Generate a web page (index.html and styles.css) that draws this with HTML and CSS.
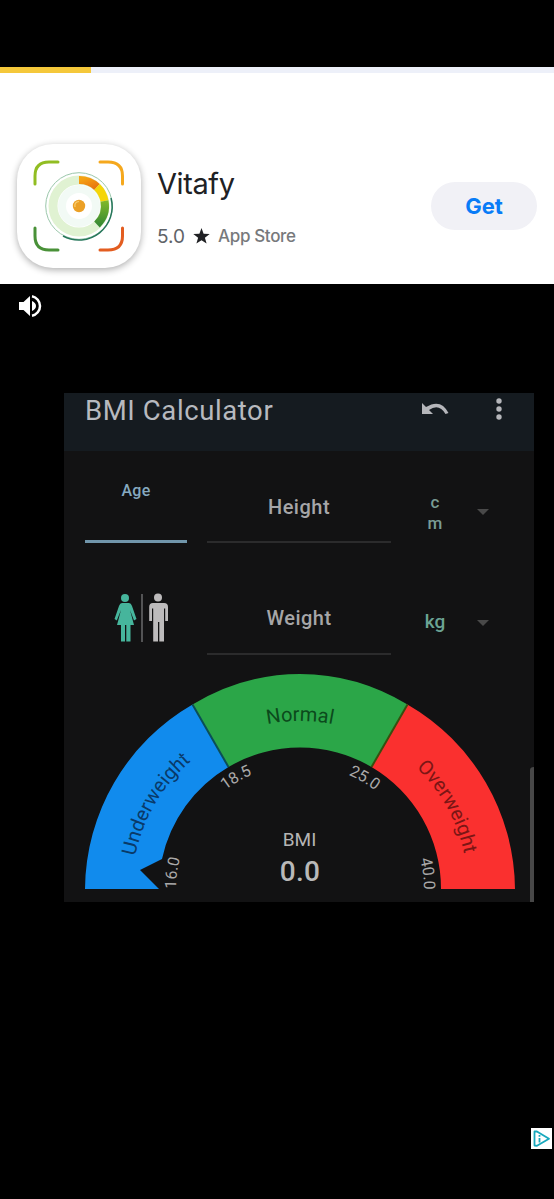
FILE: index.html
```html
<!DOCTYPE html>
<html lang="en">
<head>
<meta charset="utf-8">
<title>Vitafy</title>
<link rel="stylesheet" href="styles.css">
</head>
<body>
<div class="progress"><div class="progress-fill"></div></div>
<header class="app">
  <div class="app-icon">
    <svg width="124" height="124" viewBox="0 0 124 124" fill="none">
      <defs>
        <linearGradient id="o" x1="0" y1="0" x2="1" y2="1"><stop offset="0" stop-color="#f5a313"/><stop offset="1" stop-color="#e87510"/></linearGradient>
        <linearGradient id="g" x1="0" y1="0" x2="0" y2="1"><stop offset="0" stop-color="#80b82a"/><stop offset="1" stop-color="#388b33"/></linearGradient>
      </defs>
      <g stroke-width="3" stroke-linecap="round">
        <path d="M18 40V32Q18 18 32 18H41" stroke="#91bd22"/>
        <path d="M83 18H91Q105.500 18 105.500 32V40" stroke="#f5a81d"/>
        <path d="M18 84V92Q18 106 32 106H41" stroke="#499138"/>
        <path d="M83 106H91Q105.500 106 105.500 92V84" stroke="#e35d20"/>
      </g>
      <circle cx="62" cy="62" r="33.300" stroke="#9bc7ab" stroke-width="1"/>
      <path d="M94 54A33.300 33.300 0 0 1 46 92" stroke="#26765a" stroke-width="1.500"/>
      <circle cx="62" cy="62" r="26" stroke="#e0f2d2" stroke-width="9"/>
      <circle cx="62" cy="62" r="17" stroke="#f2faf5" stroke-width="8"/>
      <path d="M62 36A26 26 0 0 1 80 43" stroke="url(#o)" stroke-width="8"/>
      <path d="M80 43A26 26 0 0 1 87.500 57" stroke="#f5d508" stroke-width="8"/>
      <path d="M87.500 57A26 26 0 0 1 80 80.500" stroke="url(#g)" stroke-width="8"/>
      <circle cx="62" cy="62" r="6.200" fill="#eba026"/>
      <path d="M58 63Q57 58 62 57.500" stroke="#f9cf71" stroke-width="1.200"/>
    </svg>
  </div>
  <div class="app-info">
    <div class="app-name">Vitafy</div>
    <div class="app-meta">
      <span class="rating">5.0</span>
      <svg width="17" height="16" viewBox="0 0 17 16"><path d="M8.500 0L10.600 5.700L16.700 6L11.900 9.800L13.600 15.600L8.500 12.300L3.400 15.600L5.100 9.800L.3 6L6.400 5.700Z" fill="#202124"/></svg>
      <span class="store">App Store</span>
    </div>
  </div>
  <button class="get">Get</button>
</header>
<main class="video">
  <svg class="sound" width="25" height="24" viewBox="0 0 25 24"><path d="M1 8H5.500L12 2V22L5.500 16H1ZM14 7Q18 9 18 12T14 17Z" fill="#fff"/><path d="M14 2.200A10 10 0 0 1 14 21.800" fill="none" stroke="#fff" stroke-width="2.500"/></svg>
  <section class="calc">
    <div class="bar">
      <h1>BMI Calculator</h1>
      <svg class="undo" width="28" height="15" viewBox="0 0 28 15"><path d="M1 1V12H12L8 8Q18 1 24.500 12L27.500 11Q20-4 5 5Z" fill="#b5b6ba"/></svg>
      <svg class="dots" width="6" height="22" viewBox="0 0 6 22" fill="#b5b6ba"><circle cx="3" cy="3" r="2.700"/><circle cx="3" cy="11" r="2.700"/><circle cx="3" cy="19" r="2.700"/></svg>
    </div>
    <div class="row first">
      <div class="field age">Age</div>
      <div class="field">Height</div>
      <div class="unit">c<br>m</div>
      <span class="arrow"></span>
    </div>
    <div class="row second">
      <div class="gender">
        <svg width="56" height="50" viewBox="0 0 56 50">
          <g fill="#46b59c"><circle cx="11" cy="5" r="4"/><path d="M8 10H15Q17 10 18 13L22.500 26L20 27.500L16 17L20 32H16.500V48.500H12.300V32H11V48.500H7V32H3L7 17L2.800 27.500L.5 26L5 13Q6 10 8 10Z"/></g>
          <path d="M28 1V49" stroke="#77787a" stroke-width="1.300"/>
          <g fill="#bdbbbc"><circle cx="44" cy="4.500" r="4"/><path d="M39 10H50Q54 10 54 14V28H51.200V15.500H50V48.500H45.300V29H44V48.500H39.200V15.500H38V28H35.200V14Q35.200 10 39 10Z"/></g>
        </svg>
      </div>
      <div class="field">Weight</div>
      <div class="unit kg">kg</div>
      <span class="arrow"></span>
    </div>
    <svg class="gauge" width="470" height="240" viewBox="64 662 470 240">
      <defs>
        <path id="label-arc" d="M132 889A168 168 0 0 1 468 889"/>
        <path id="normal-arc" d="M134 887A166 166 0 0 1 466 887"/>
        <path id="tick-arc" d="M176 900V889A124 124 0 0 1 424 889V900"/>
      </defs>
      <path d="M85 889A215 215 0 0 1 192.500 704.500L228.500 767A141 141 0 0 0 162 859L140 870L159 889Z" fill="#118bed"/>
      <path d="M192.500 704.500Q243 674 300 674T407.500 704.500L371.500 767A141 141 0 0 0 228.500 767Z" fill="#2ba648"/>
      <path d="M407.500 704.500A215 215 0 0 1 515 889H441A141 141 0 0 0 371.500 767Z" fill="#fa302f"/>
      <path d="M192.500 704.500L228.500 767" stroke="#0b4f56" stroke-width="2"/>
      <path d="M407.500 704.500L371.500 767" stroke="#36500f" stroke-width="2"/>
      <g class="zone">
        <text fill="#093a69"><textPath href="#label-arc" startOffset="33">Underweight</textPath></text>
        <text fill="#0b4a1c" text-anchor="middle"><textPath href="#normal-arc" startOffset="50%">Normal</textPath></text>
        <text fill="#7b1615"><textPath href="#label-arc" startOffset="392">Overweight</textPath></text>
      </g>
      <g class="tick">
        <text><textPath href="#tick-arc" startOffset="11">16.0</textPath></text>
        <text text-anchor="middle"><textPath href="#tick-arc" startOffset="141">18.5</textPath></text>
        <text text-anchor="middle"><textPath href="#tick-arc" startOffset="271">25.0</textPath></text>
        <text text-anchor="end"><textPath href="#tick-arc" startOffset="401">40.0</textPath></text>
      </g>
      <text class="bmi" x="299.500" y="846">BMI</text>
      <text class="value" x="300" y="881">0.0</text>
      <path d="M530 902V770Q530 767 534 767V902Z" fill="#474747"/>
    </svg>
  </section>
  <svg class="adchoice" width="21" height="21" viewBox="0 0 21 21"><path d="M0 0H21V21H0Z" fill="#fff"/><path d="M3.500 3.500V17.500L6 17.800L18 10.800L5.500 3.300Z" fill="none" stroke="#18a8bd" stroke-width="1.800" stroke-linejoin="round"/><path d="M8.500 7V8.800M8.500 10V14.500" stroke="#18a8bd" stroke-width="1.800"/></svg>
</main>
</body>
</html>
```
FILE: styles.css
```css
* { box-sizing: border-box; }
body { margin: 0; height: 1199px; padding-top: 67px; background: #000; display: flex; flex-direction: column; font-family: Roboto, sans-serif; overflow: hidden; }
.progress { height: 6px; background: #edf0f9; }
.progress-fill { width: 91px; height: 6px; background: #f5c83b; }
.app { height: 211px; background: #fff; padding: 71px 17px 0 17px; display: flex; align-items: flex-start; font-family: Inter, sans-serif; }
.app-icon { width: 124px; height: 124px; border-radius: 36px; background: #fff; box-shadow: 0 2px 7px rgba(0, 0, 0, .32); }
.app-icon svg { display: block; margin-left: -.5px; }
.app-info { margin-left: 16px; padding-top: 20px; flex: 1; }
.app-name { font-size: 29px; line-height: 40px; color: #202124; letter-spacing: -.4px; }
.app-meta { display: flex; align-items: center; height: 24px; margin-top: 20px; color: #5f6368; }
.app-meta svg { margin: 0 8px; }
.rating { font-size: 19px; }
.store { font-size: 17px; font-weight: 500; color: #77797c; letter-spacing: -.35px; }
.get { width: 106px; height: 48px; margin-top: 38px; border: 0; border-radius: 24px; background: #f1f1f6; color: #087cf7; font: 700 22px Inter, sans-serif; }
.video { flex: 1; display: flex; flex-direction: column; }
.sound { margin: 10px 0 0 18px; }
.calc { width: 470px; height: 509px; margin: 75px 0 0 64px; background: #121213; }
.bar { height: 58px; display: flex; align-items: flex-start; background: #151b20; padding: 0 32px 0 21px; }
.bar h1 { margin: 0; flex: 1; font-size: 27.500px; font-weight: 400; line-height: 36px; letter-spacing: .6px; color: #b7b9bf; white-space: nowrap; }
.undo { margin: 9px 47px 0 0; }
.dots { margin-top: 5px; }
.row { display: grid; grid-template-columns: 102px 184px 48px 12px; column-gap: 20px; padding-left: 21px; }
.first { height: 92px; }
.second { height: 119px; padding-top: 19px; }
.field { height: 92px; border-bottom: 2px solid #2b2b2c; padding-top: 43px; text-align: center; font-size: 20px; font-weight: 500; line-height: 26px; color: #a6a6a8; letter-spacing: .5px; }
.second .field { height: 93px; }
.age { border-bottom: 3px solid #7196ab; padding-top: 28px; font-size: 16px; line-height: 24px; color: #86a9bf; letter-spacing: .2px; }
.unit { padding-top: 41px; text-align: center; font-size: 17px; font-weight: 500; line-height: 21px; color: #799c94; }
.kg { padding-top: 49px; font-size: 19px; color: #6ba394; }
.arrow { width: 12px; height: 6px; margin: 58px 0 0 -2px; background: #494949; clip-path: polygon(0 0, 100% 0, 50% 100%); }
.gender { padding: 31px 0 0 29px; }
.gauge { display: block; }
.gauge text { font-family: Roboto, sans-serif; }
.zone { font-size: 20px; }
.tick { font-size: 16px; fill: #aaa9a9; }
.gauge .bmi { font-size: 19px; text-anchor: middle; fill: #b5b5b5; }
.gauge .value { font-size: 28px; font-weight: 500; text-anchor: middle; letter-spacing: .3px; fill: #b9b9b9; }
.adchoice { margin: 226px 0 0 531px; }
```
